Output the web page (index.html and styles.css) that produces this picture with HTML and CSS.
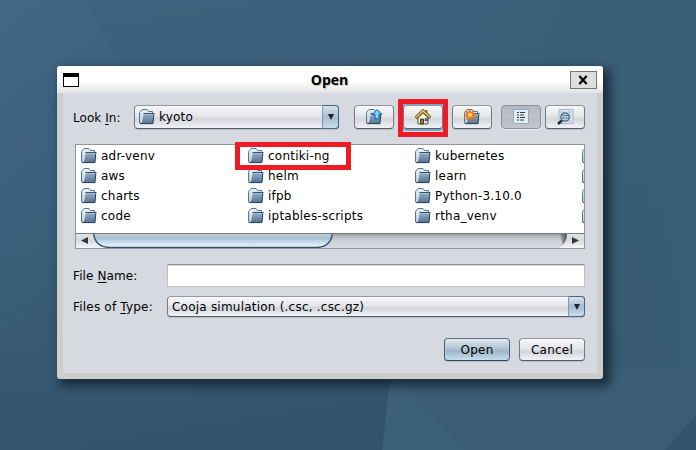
FILE: index.html
```
<!DOCTYPE html>
<html lang="en">
<head>
<meta charset="utf-8">
<title>Open</title>
<link rel="stylesheet" href="styles.css">
</head>
<body>
<svg class="wallpaper" viewBox="0 0 696 450" aria-hidden="true">
  <defs>
    <linearGradient id="wall" x1="0" y1="0" x2="0.25" y2="1"><stop offset="0" stop-color="#3c627f"/><stop offset=".5" stop-color="#3a5d77"/><stop offset="1" stop-color="#33536c"/></linearGradient>
    <linearGradient id="right" x1="0" y1="0" x2="1" y2="0"><stop offset="0" stop-color="#3a5d76" stop-opacity="0"/><stop offset="1" stop-color="#3a5d76"/></linearGradient>
    <linearGradient id="left" x1="0" y1="0" x2="0.3" y2="1"><stop offset="0" stop-color="#436985"/><stop offset="1" stop-color="#385b76"/></linearGradient>
    <linearGradient id="fold" x1="0" y1="0" x2="0" y2="1"><stop offset="0" stop-color="#e9f3f8"/><stop offset="1" stop-color="#b4c8d6"/></linearGradient>
    <linearGradient id="front" x1="0" y1="0" x2="0" y2="1"><stop offset="0" stop-color="#8fa9c2"/><stop offset="1" stop-color="#557491"/></linearGradient>
    <symbol id="folder" viewBox="0 0 16 16">
      <path d="M.5 14V3.500L3 .5h5L9.500 2.500H13.500v12H1.500z" fill="url(#fold)" stroke="#5b7890"/>
      <path d="M4.500 5.500h10.500l-1 9H2z" fill="url(#front)"/>
      <path d="M2.500 13.500l1.500-8" fill="none" stroke="#dce8f0"/>
      <path d="M4.500 4.500h11" stroke="#34536d"/>
      <path d="M4.500 5.500h10.300" stroke="#a6bfd3"/>
      <path d="M1 14.600h13l.8-9.300" fill="none" stroke="#27425a"/>
    </symbol>
  </defs>
  <path fill="url(#wall)" d="M0 0h696v450H0z"/>
  <path fill="url(#right)" d="M390 0h306v450H390z"/>
  <path fill="url(#left)" d="M0 0h87l44 90-70 210L0 330z" opacity=".75"/>
  <path fill="#3d6079" d="M391 370l-9 80h84l-75-80z"/>
  <path fill="#3a5d75" d="M391 370h305v80H466z"/>
  <path fill="#33536d" d="M696 415v35h-31z"/>
</svg>
<main class="window">
  <header class="titlebar">
    <span class="win-icon"></span>
    <h1>Open</h1>
    <button class="close" aria-label="Close"><svg width="10" height="10" viewBox="0 0 10 10"><path d="M1.300 1l7.400 8M8.700 1L1.300 9" stroke="#000" stroke-width="2.200"/></svg></button>
  </header>
  <section class="content">
    <div class="toolbar">
      <span class="look">Look <u>I</u>n:</span>
      <div class="combo look-in"><svg class="icon"><use href="#folder"/></svg><span>kyoto</span><i class="drop"></i></div>
      <button class="btn tool up"><svg width="16" height="16"><use href="#folder"/><path d="M11 .5l4.700 5h-2.500v4.300H8.800V5.500H6.300z" fill="#62bff2" stroke="#1668a8"/><path d="M11 2v7" stroke="#b3e5ff"/></svg></button>
      <button class="btn tool home"><svg width="16" height="16"><path d="M3 7.500L8 3l5 4.500v7.300H3z" fill="#fff6dc" stroke="#524f4b"/><path d="M11.500 1v4" stroke="#826d3c" stroke-width="2"/><path d="M.8 9L8 2l7.200 7" fill="none" stroke="#5e4920" stroke-width="3.500"/><path d="M1 8.500L8 1.800l7 6.700" fill="none" stroke="#e8c45b" stroke-width="1.700"/><path d="M5.500 10h3v5h-3z" fill="#a67829" stroke="#4d3a19"/><path d="M10 9.500h2.500V12H10z" fill="#3981ba" stroke="#285475" stroke-width=".7"/></svg></button>
      <button class="btn tool new"><svg width="16" height="16"><use href="#folder"/><path d="M6 0l1 3.200 3-2-1 3.300 3.400.5-3 1.700 2 3-3.600-1L7 12 5.300 8.800 2 11l1.100-3.500L0 7l2.700-2L1 1.600l3.500 1.500z" fill="#ff7b22" stroke="#c9752e" stroke-width=".5"/><circle cx="6" cy="5.800" r="2" fill="#ffe14b"/></svg></button>
      <button class="btn tool list pressed"><svg width="16" height="16"><path d="M.5.5h15v14H.5z" fill="#e4edf5" stroke="#92a9bd"/><path d="M4 3.500h2M4 6h2M4 8.500h2M4 11h2M7 3.500h5M7 6h4M7 8.500h5M7 11h4" stroke="#293c4d"/></svg></button>
      <button class="btn tool detail"><svg width="17" height="16"><path d="M2 .5h14v14H2z" fill="#dce7f1" stroke="#a2b7c9"/><path d="M4 3h2M11 3h3M12 6h2M12 9h2M10 12h4" stroke="#a1afbd"/><path d="M5 11.500L1 15" stroke="#22252a" stroke-width="2.400"/><circle cx="8" cy="8" r="4.200" fill="#b3d6ed" stroke="#4b6379" stroke-width="1.300"/><path d="M5.500 6.500h2m1 0h2M5.500 9h2m1 0h2" stroke="#344f68" stroke-width="1.200"/></svg></button>
    </div>
    <div class="files">
      <div class="grid">
        <div class="file"><svg class="icon"><use href="#folder"/></svg>adr-venv</div>
        <div class="file"><svg class="icon"><use href="#folder"/></svg>aws</div>
        <div class="file"><svg class="icon"><use href="#folder"/></svg>charts</div>
        <div class="file"><svg class="icon"><use href="#folder"/></svg>code</div>
        <div class="file"><svg class="icon"><use href="#folder"/></svg>contiki-ng</div>
        <div class="file"><svg class="icon"><use href="#folder"/></svg>helm</div>
        <div class="file"><svg class="icon"><use href="#folder"/></svg>ifpb</div>
        <div class="file"><svg class="icon"><use href="#folder"/></svg>iptables-scripts</div>
        <div class="file"><svg class="icon"><use href="#folder"/></svg>kubernetes</div>
        <div class="file"><svg class="icon"><use href="#folder"/></svg>learn</div>
        <div class="file"><svg class="icon"><use href="#folder"/></svg>Python-3.10.0</div>
        <div class="file"><svg class="icon"><use href="#folder"/></svg>rtha_venv</div>
        <div class="file"><svg class="icon"><use href="#folder"/></svg></div>
        <div class="file"><svg class="icon"><use href="#folder"/></svg></div>
        <div class="file"><svg class="icon"><use href="#folder"/></svg></div>
        <div class="file"><svg class="icon"><use href="#folder"/></svg></div>
      </div>
      <svg class="scroll" viewBox="0 0 508 15">
        <defs>
          <linearGradient id="track" x1="0" y1="0" x2="0" y2="1"><stop offset="0" stop-color="#878a90"/><stop offset=".2" stop-color="#b5b7be"/><stop offset=".5" stop-color="#ced0d6"/><stop offset="1" stop-color="#d8dae1"/></linearGradient>
          <linearGradient id="thumb" x1="0" y1="0" x2="0" y2="1"><stop offset="0" stop-color="#c1d0de"/><stop offset=".4" stop-color="#a9bfd2"/><stop offset=".5" stop-color="#b9d0e2"/><stop offset="1" stop-color="#e8fbff"/></linearGradient>
          <linearGradient id="cap" x1="0" y1="0" x2="0" y2="1"><stop offset="0" stop-color="#e2e3e6"/><stop offset=".5" stop-color="#d8dae0"/><stop offset="1" stop-color="#f5f5f8"/></linearGradient>
          <linearGradient id="edge" x1="0" y1="0" x2="1" y2="0"><stop offset="0" stop-color="#555" stop-opacity="0"/><stop offset="1" stop-color="#444"/></linearGradient>
        </defs>
        <path d="M0 0h508v15H0z" fill="url(#track)"/>
        <path d="M0 0h17q1 10 13 15H0z" fill="url(#cap)"/>
        <path d="M17.500 0Q19 14.500 34 14.500H240Q255 14.500 256.500 0" fill="url(#thumb)" stroke="#34536e" stroke-width="1.400"/>
        <path d="M483 0h8v6l-4 6z" fill="url(#edge)"/>
        <path d="M508 0h-17q0 11-8 15h25z" fill="url(#cap)"/>
        <path d="M0 .5h508" stroke="#777b82"/>
        <path d="M5 7.500l7-3.500v7zM503 7.500l-7-3.500v7z" fill="#333639"/>
      </svg>
    </div>
    <div class="field name-row"><label for="name">File <u>N</u>ame:</label><input id="name" type="text"></div>
    <div class="field type-row"><span class="label">Files of <u>T</u>ype:</span><div class="combo type"><span>Cooja simulation (.csc, .csc.gz)</span><i class="drop"></i></div></div>
    <div class="actions"><button class="btn action primary">Open</button><button class="btn action">Cancel</button></div>
  </section>
</main>
<div class="mark mark-home"></div>
<div class="mark mark-folder"></div>
</body>
</html>
```
FILE: styles.css
```
* { box-sizing: border-box; }
body {
  margin: 0;
  width: 696px;
  height: 450px;
  overflow: hidden;
  position: relative;
  font: 12px/16px "DejaVu Sans", sans-serif;
  letter-spacing: .22px;
  color: #000;
  background: #395b75;
}
svg { display: block; flex: none; }
u { text-decoration: underline; text-underline-offset: 2px; text-decoration-thickness: 1px; text-decoration-skip-ink: none; }
.wallpaper { position: absolute; left: 0; top: 0; width: 696px; height: 450px; }
.window {
  position: absolute;
  left: 57px;
  top: 66px;
  width: 546px;
  height: 313px;
  padding: 0 6px 6px;
  border-radius: 3px;
  background: #cdcdcd;
  box-shadow: 5px 5px 10px 2px rgba(15, 28, 39, .75);
}
.titlebar {
  height: 27px;
  margin: 0 -6px;
  padding: 1px 6px 0;
  display: flex;
  align-items: center;
  justify-content: space-between;
  border-radius: 3px 3px 0 0;
  background: linear-gradient(#fff 0 55%, #e4e4e4);
}
.win-icon { width: 16px; height: 14px; margin-right: 10px; border: 1px solid #000; border-top-width: 4px; background: #fff; }
h1 { margin: 0; font: bold 14px/18px "Open Sans", "Noto Sans", sans-serif; letter-spacing: 0; text-shadow: 1px 1px 1px #bbb; }
.close { width: 27px; height: 18px; padding: 0; display: grid; place-items: center; background: #dedede; border: 1px solid #777; }
.content { height: 280px; padding: 12px 12px 0 10px; background: #d6d9e0; }
.toolbar { display: flex; height: 24px; }
.look { width: 61px; padding-top: 5px; letter-spacing: .05px; }
.combo, .btn {
  border: 1px solid #777c84;
  border-color: #9498a0 #777c84 #555b66;
  border-radius: 4px;
  background: linear-gradient(#f8f8fa, #e4e6ea 45%, #d4d6dd 60%, #f1f2f7);
  box-shadow: 0 1px 1px #b8bcc4;
}
.combo { position: relative; display: flex; align-items: center; }
.look-in { width: 205px; height: 24px; padding-left: 4px; }
.look-in span { margin-left: 4px; }
.icon { width: 16px; height: 16px; }
.drop {
  position: absolute;
  right: -1px;
  top: -1px;
  bottom: -1px;
  width: 17px;
  display: grid;
  place-items: center;
  border: 1px solid #486782;
  border-left-color: #7d9ab4;
  border-radius: 0 4px 4px 0;
  background: linear-gradient(#d9e2eb, #a5bcd0 50%, #c8dcec);
}
.drop::before { content: ""; border: 3.5px solid transparent; border-top: 6px solid #222; border-bottom: 0; }
.btn { padding: 0; display: grid; place-items: center; font: inherit; letter-spacing: inherit; color: inherit; }
.tool { width: 40px; height: 24px; }
.up { margin-left: 15px; }
.home { margin-left: 9px; box-shadow: 0 0 0 2px #7ba8d0; }
.new { margin-left: 9px; }
.list { margin-left: 9px; }
.detail { margin-left: 4px; }
.pressed { background: linear-gradient(#b4b7bf, #bfc2c9 45%, #b9bcc4 60%, #c4c7ce); border-color: #8d9198; box-shadow: 0 1px 1px #eceef3; }
.files { margin: 15px 0 0 2px; width: 510px; height: 105px; border: 1px solid #92969f; background: #fff; }
.grid { display: grid; grid-template-rows: repeat(4, 20px); grid-auto-flow: column; grid-auto-columns: 167px; height: 88px; padding: 1px 0 0 5px; overflow: hidden; }
.file { display: flex; align-items: center; gap: 4px; white-space: nowrap; }
.scroll { width: 508px; height: 15px; }
.field { display: flex; }
.name-row { margin-top: 15px; }
.type-row { margin-top: 9px; }
.field label, .label { width: 94px; padding-top: 4px; white-space: nowrap; letter-spacing: .1px; }
.field .label { padding-top: 3px; letter-spacing: .2px; }
input { width: 418px; height: 23px; border: 1px solid #bfc1c6; border-top-color: #8d8f94; border-radius: 0; background: #fff; box-shadow: inset 0 1px #dcdde0; }
.type { width: 418px; height: 21px; padding-left: 4px; }
.actions { display: flex; justify-content: flex-end; gap: 9px; margin-top: 21px; }
.action { width: 66px; height: 23px; }
.primary { border-color: #58748d #45627b #29445c; background: linear-gradient(#e0e8ef, #b3c5d5 45%, #9fb5c9 58%, #c6ddef); }
.mark { position: absolute; border: 5px solid #ed1c24; }
.mark-home { left: 398px; top: 99px; width: 50px; height: 38px; }
.mark-folder { left: 235px; top: 142px; width: 116px; height: 28px; }
```
